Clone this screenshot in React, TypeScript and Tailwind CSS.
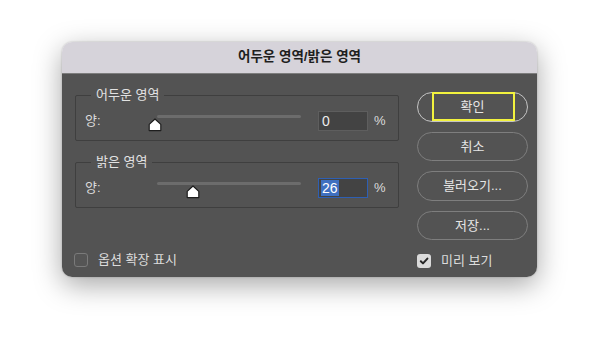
import React from 'react';

const FONT = "font-['Liberation_Sans','Noto_Sans_CJK_KR',sans-serif]";

const Thumb: React.FC<{ pct: number }> = ({ pct }) => (
  <svg
    className="absolute top-[7px]"
    style={{ left: `${(pct / 100) * 148}px` }}
    width="14"
    height="14"
    viewBox="0 0 14 14"
  >
    <path
      d="M7 1 L12.8 6.4 L12.8 12.6 L1.2 12.6 L1.2 6.4 Z"
      fill="#ffffff"
      stroke="#1e1e1e"
      strokeWidth="1.2"
      strokeLinejoin="round"
    />
  </svg>
);

const Group: React.FC<{ title: string; value: number; focused?: boolean; className?: string }> = ({
  title,
  value,
  focused,
  className,
}) => (
  <div className={`relative h-[46px] rounded-[2px] border border-[#3f3f3f] ${className ?? ''}`}>
    <span className="absolute -top-[9px] left-[15px] bg-[#535353] px-[5px] text-[13px] leading-[16px] text-[#e2e2e2]">
      {title}
    </span>
    <div className="flex h-full items-start pl-[9px] pt-[15px]">
      <span className="w-[63px] text-[13px] leading-[20px] text-[#dcdcdc]">양:</span>
      <div className="relative h-[20px] w-[153px]">
        <div className="absolute left-[9px] right-0 top-[4px] h-[3px] rounded-full bg-[#6c6c6c]" />
        <Thumb pct={value} />
      </div>
      {focused ? (
        <div className="ml-[17px] flex h-[20px] w-[50px] items-center border-[1.5px] border-[#2e5fb3] bg-[#434343] pl-[2px]">
          <span className="bg-[#3f70c0] px-[1px] text-[14px] leading-[16px] text-white">{value}</span>
        </div>
      ) : (
        <div className="ml-[17px] flex h-[20px] w-[50px] items-center border border-[#5e5e5e] bg-[#434343] pl-[3px] text-[14px] leading-[16px] text-[#ececec]">
          {value}
        </div>
      )}
      <span className="ml-[6px] text-[13px] leading-[20px] text-[#dcdcdc]">%</span>
    </div>
  </div>
);

const PillButton: React.FC<{ label: string; primary?: boolean }> = ({ label, primary }) => (
  <button
    className={`relative flex h-[29.5px] w-[111px] items-center justify-center rounded-full border text-[13px] text-[#e6e6e6] ${
      primary ? 'border-[#c4c4c4]' : 'border-[#7e7e7e]'
    }`}
  >
    {label}
    {primary && (
      <span className="pointer-events-none absolute -top-[1.5px] bottom-[0px] left-[14px] right-[12px] border-2 border-[#f2f23e]" />
    )}
  </button>
);

const App: React.FC = () => {
  return (
    <div className={`h-[360px] w-[600px] overflow-hidden bg-white pt-[42px] ${FONT}`}>
      <div className="ml-[62px] h-[235px] w-[475px] overflow-hidden rounded-[10px] shadow-[0_8px_28px_rgba(0,0,0,0.35),0_0_2px_rgba(0,0,0,0.25)]">
        {/* Title bar */}
        <div className="flex h-[32px] items-center justify-center border-b-[1.5px] border-[#7d7d7d] bg-[#d6d3da]">
          <span className="text-[13.5px] font-semibold text-[#1f1f1f]">어두운 영역/밝은 영역</span>
        </div>

        {/* Body */}
        <div className="flex h-[203px] bg-[#535353]">
          <div className="ml-[13px] w-[324px] pt-[21px]">
            <Group title="어두운 영역" value={0} />
            <Group title="밝은 영역" value={26} focused className="mt-[21px]" />
            <label className="-ml-[1px] mt-[44px] flex items-center">
              <span className="h-[14px] w-[14px] rounded-[3px] border-[1.5px] border-[#7a7a7a] bg-[#555]" />
              <span className="ml-[10px] text-[13px] leading-[16px] text-[#dcdcdc]">옵션 확장 표시</span>
            </label>
          </div>

          <div className="ml-auto mr-[9px] w-[111px] pt-[18px]">
            <div className="flex flex-col gap-[10px]">
              <PillButton label="확인" primary />
              <PillButton label="취소" />
              <PillButton label="불러오기..." />
              <PillButton label="저장..." />
            </div>
            <label className="mt-[13px] flex items-center">
              <span className="flex h-[14px] w-[14px] items-center justify-center rounded-[3px] bg-[#dadada]">
                <svg width="10" height="10" viewBox="0 0 10 10">
                  <path d="M1.8 5.2 L4 7.4 L8.4 2.6" fill="none" stroke="#262626" strokeWidth="2" strokeLinecap="round" strokeLinejoin="round" />
                </svg>
              </span>
              <span className="ml-[10px] text-[13px] leading-[16px] text-[#dcdcdc]">미리 보기</span>
            </label>
          </div>
        </div>
      </div>
    </div>
  );
};

export default App;
